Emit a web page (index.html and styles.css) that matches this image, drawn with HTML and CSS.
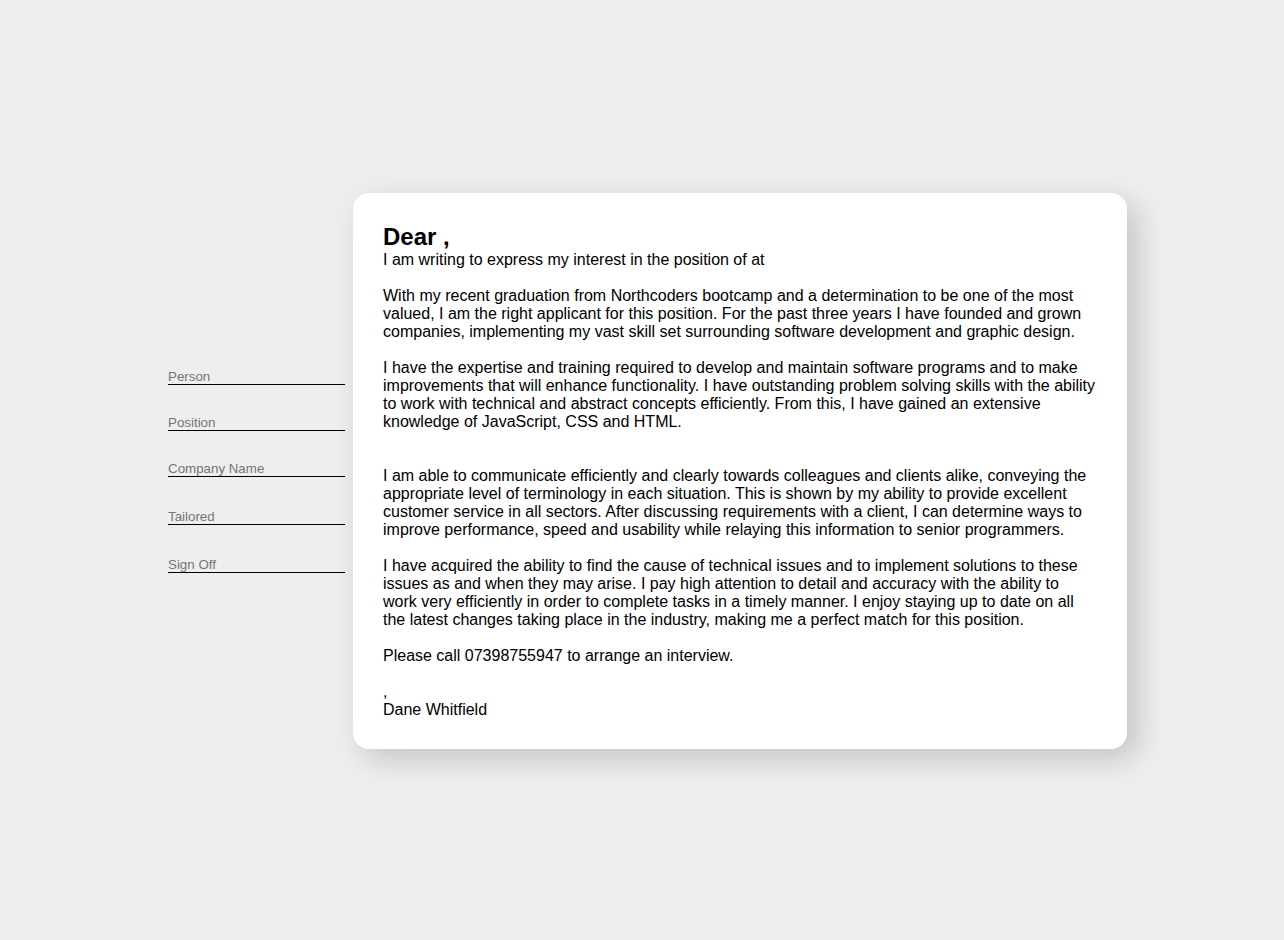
FILE: index.html
```html
<!DOCTYPE html>
<html lang="en">
<head>
<meta charset="utf-8">
<title>Cover Letter</title>
<link rel="stylesheet" href="styles.css">
</head>
<body>
<main class="page">
  <form class="form">
    <input class="field" type="text" placeholder="Person">
    <input class="field" type="text" placeholder="Position">
    <input class="field" type="text" placeholder="Company Name">
    <input class="field field--tall" type="text" placeholder="Tailored">
    <input class="field field--tall" type="text" placeholder="Sign Off">
  </form>
  <article class="letter">
    <h1 class="letter__title">Dear ,</h1>
    <p class="letter__p">I am writing to express my interest in the position of  at </p>
    <p class="letter__p">With my recent graduation from Northcoders bootcamp and a determination to be one of the most valued, I am the right applicant for this position. For the past three years I have founded and grown companies, implementing my vast skill set surrounding software development and graphic design.</p>
    <p class="letter__p letter__p--wide">I have the expertise and training required to develop and maintain software programs and to make improvements that will enhance functionality. I have outstanding problem solving skills with the ability to work with technical and abstract concepts efficiently. From this, I have gained an extensive knowledge of JavaScript, CSS and HTML.</p>
    <p class="letter__p">I am able to communicate efficiently and clearly towards colleagues and clients alike, conveying the appropriate level of terminology in each situation. This is shown by my ability to provide excellent customer service in all sectors. After discussing requirements with a client, I can determine ways to improve performance, speed and usability while relaying this information to senior programmers.</p>
    <p class="letter__p">I have acquired the ability to find the cause of technical issues and to implement solutions to these issues as and when they may arise. I pay high attention to detail and accuracy with the ability to work very efficiently in order to complete tasks in a timely manner. I enjoy staying up to date on all the latest changes taking place in the industry, making me a perfect match for this position.</p>
    <p class="letter__p">Please call 07398755947 to arrange an interview.</p>
    <p class="letter__sign">,<br>Dane Whitfield</p>
  </article>
</main>
</body>
</html>
```
FILE: styles.css
```css
html, body {
  margin: 0;
  padding: 0;
  height: 100%;
}

body {
  background: #eeeeee;
  font-family: "Liberation Sans", Arial, sans-serif;
  color: #000;
}

.page {
  min-height: 940px;
  box-sizing: border-box;
  padding-top: 2px;
  display: flex;
  align-items: center;
  justify-content: center;
  gap: 8px;
}

.form {
  display: flex;
  flex-direction: column;
  gap: 30px;
  padding-left: 11px;
}

.field {
  width: 177px;
  height: 16px;
  box-sizing: border-box;
  margin: 0;
  padding: 0;
  border: none;
  border-bottom: 1px solid #000;
  background: transparent;
  font-family: "Liberation Sans", Arial, sans-serif;
  font-size: 13.333px;
  line-height: 15px;
  color: #000;
  outline: none;
}

.field--tall {
  height: 18px;
  padding-top: 2px;
}

.field::placeholder {
  color: #757575;
}

.letter {
  width: 774px;
  box-sizing: border-box;
  padding: 30px;
  background: #fff;
  border-radius: 16px;
  box-shadow: 10px 10px 30px rgba(0, 0, 0, 0.18);
  font-size: 16px;
  line-height: normal;
}

.letter__title {
  margin: 0;
  font-size: 24px;
  font-weight: bold;
  line-height: normal;
}

.letter__p {
  margin: 0 0 18px;
}

.letter__p--wide {
  margin-bottom: 36px;
}

.letter__sign {
  margin: 0;
}
```
